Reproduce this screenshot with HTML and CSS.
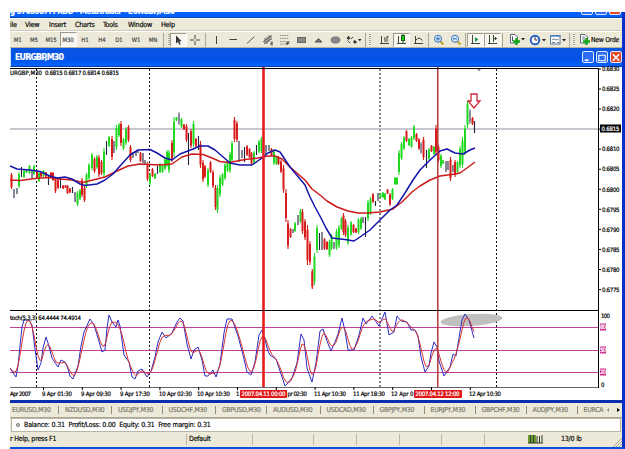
FILE: index.html
```html
<!DOCTYPE html>
<html lang="en">
<head>
    <meta charset="UTF-8">
    <meta name="viewport" content="width=device-width, initial-scale=1.0">
    <title>MetaTrader - EURGBP,M30</title>
    <link rel="stylesheet" href="styles.css">
</head>
<body>
    <div class="window">
        <div class="titlebar">
            <span class="title-text">g 5705987: FXDD - MetaTrader - EURGBP,M30</span>
            <div class="win-buttons cut">
                <span class="wb"></span><span class="wb"></span><span class="wb close"></span>
            </div>
        </div>
        <div class="menu">
            <span>ile</span><span>View</span><span>Insert</span><span>Charts</span><span>Tools</span><span>Window</span><span>Help</span>
        </div>
        <div class="toolbar">
            <span class="tf">M1</span><span class="tf">M5</span><span class="tf">M15</span><span class="tf on">M30</span><span class="tf">H1</span><span class="tf">H4</span><span class="tf">D1</span><span class="tf">W1</span><span class="tf">MN</span>
            <i class="sep"></i><i class="grip"></i>
            <span class="tool on"><svg width="12" height="12" viewBox="0 0 12 12"><path d="M3 1.500V9.500L5 7.800L6.300 10.800L7.700 10.200L6.400 7.300H8.700Z" fill="#333"/></svg></span>
            <span class="tool"><svg width="12" height="12" viewBox="0 0 12 12"><path d="M5 1V5M5 7V11M0 6H4M6 6H10" stroke="#444"/></svg></span>
            <i class="sep"></i>
            <span class="tool"><svg width="12" height="12" viewBox="0 0 12 12"><path d="M5.500 2V10" stroke="#444"/></svg></span>
            <span class="tool"><svg width="12" height="12" viewBox="0 0 12 12"><path d="M1.500 5.500H9" stroke="#444"/></svg></span>
            <span class="tool"><svg width="12" height="12" viewBox="0 0 12 12"><path d="M2 9.500L9.500 2.500" stroke="#444" stroke-width=".9"/></svg></span>
            <span class="tool"><svg width="12" height="12" viewBox="0 0 12 12"><path d="M1 8L9 2M2 10L9 5M3 4V9M5 3V10M7 1V8M9 1V6M11 8H9V11H11M9 9.500H11" stroke="#444" stroke-width=".8" fill="none"/></svg></span>
            <span class="tool"><svg width="12" height="12" viewBox="0 0 12 12"><path d="M1 1.500H10M1 4.500H10M1 7.500H7M1 10H7" stroke="#777" stroke-dasharray="1.500 .7" stroke-width=".8"/><path d="M8 11V8H10.500M8 9.500H10" stroke="#333" fill="none"/></svg></span>
            <span class="tool"><svg width="12" height="12" viewBox="0 0 12 12"><rect x="1.500" y="3.500" width="8" height="5" fill="#888" stroke="#666"/></svg></span>
            <span class="tool"><svg width="12" height="12" viewBox="0 0 12 12"><path d="M2 8L5.500 4.500L9 8Z" fill="#777" stroke="#555"/></svg></span>
            <span class="tool"><svg width="12" height="12" viewBox="0 0 12 12"><ellipse cx="5.500" cy="6" rx="4.300" ry="3" fill="#888" stroke="#666"/></svg></span>
            <span class="tool"><svg width="18" height="12" viewBox="0 0 18 12"><path d="M1.500 4L3.500 2L5.500 4L3.500 6ZM8 7.500L9.800 6L12 8L9.800 10Z" fill="#333"/><path d="M2.500 6.500L5 9M6 5L8 3" stroke="#444"/><path d="M13 5H16.500L14.800 7.300Z" fill="#222"/></svg></span>
            <i class="sep"></i><i class="grip"></i>
            <span class="tool"><svg width="12" height="12" viewBox="0 0 12 12"><path d="M2.500 2V9.500H10M5 4H6V8M8 2V8M8 3H9.500M1 9.500H3" stroke="#3d4a35" fill="none"/></svg></span>
            <span class="tool on"><svg width="12" height="12" viewBox="0 0 12 12"><path d="M2.500 2V9.500H10M1 9.500H3M7 0V9" stroke="#3d4a35" fill="none"/><rect x="5.500" y="1.500" width="3" height="5" fill="#1ed01e" stroke="#185c18"/></svg></span>
            <span class="tool"><svg width="12" height="12" viewBox="0 0 12 12"><path d="M2.500 2V9.500H10M1 9.500H3M3 6Q6 2 9.500 6.500" stroke="#3d4a35" fill="none"/></svg></span>
            <i class="sep"></i>
            <span class="tool"><svg width="12" height="12" viewBox="0 0 12 12"><path d="M7 7L10.500 10.500" stroke="#c9a227" stroke-width="2"/><circle cx="5" cy="4.800" r="3.500" fill="#dcecff" stroke="#3771b5"/><path d="M3 4.800H7M5 2.800V6.800" stroke="#205fb0"/></svg></span>
            <span class="tool"><svg width="12" height="12" viewBox="0 0 12 12"><path d="M7 7L10.500 10.500" stroke="#c9a227" stroke-width="2"/><circle cx="5" cy="4.800" r="3.500" fill="#dcecff" stroke="#3771b5"/><path d="M3 4.800H7" stroke="#205fb0"/></svg></span>
            <i class="sep"></i>
            <span class="tool on"><svg width="12" height="12" viewBox="0 0 12 12"><path d="M2.500 1V9.500H10M1 9.500H3" stroke="#3d4a35" fill="none"/><path d="M5 3V8L8.500 5.500Z" fill="#1c9c4a"/></svg></span>
            <span class="tool on"><svg width="12" height="12" viewBox="0 0 12 12"><path d="M2.500 1V9.500H10M1 9.500H3M6.500 1V8M6.500 4.500H10M8.500 3V6" stroke="#3d4a35" fill="none"/></svg></span>
            <i class="sep"></i>
            <span class="tool"><svg width="18" height="13" viewBox="0 0 18 13"><path d="M2.500 1.500H7L9.500 4V10H2.500Z" fill="#fff" stroke="#567"/><path d="M4.500 3.500V8" stroke="#456"/><path d="M8.500 5V12M5 8.500H12" stroke="#17a51c" stroke-width="2.400"/><path d="M13 5H17L15 7.500Z" fill="#222"/></svg></span>
            <span class="tool"><svg width="18" height="12" viewBox="0 0 18 12"><circle cx="6" cy="6" r="4.300" fill="#fff" stroke="#245fc0" stroke-width="1.900"/><path d="M6 3V6H8.500" stroke="#333" fill="none"/><path d="M13 5H17L15 7.500Z" fill="#222"/></svg></span>
            <span class="tool"><svg width="18" height="12" viewBox="0 0 18 12"><rect x="1.500" y="1.500" width="9.500" height="8.500" fill="#fff" stroke="#54799c"/><path d="M1 2H11.500" stroke="#4a86c8" stroke-width="1.500"/><path d="M3 6L5 4.800L7 6L9.500 5M3 8.500H6M8 8.500H10" stroke="#556" fill="none" stroke-width=".8"/><path d="M13 5H17L15 7.500Z" fill="#222"/></svg></span>
            <i class="sep"></i><i class="grip"></i>
            <span class="neworder"><svg width="13" height="13" viewBox="0 0 13 13"><path d="M2.500 1.500H7L9.500 4V10H2.500Z" fill="#fff" stroke="#567"/><path d="M4 4H7M4 6H7" stroke="#456" stroke-width=".8"/><path d="M8.500 5V12M5 8.500H12" stroke="#17a51c" stroke-width="2.400"/></svg>New Orde</span>
        </div>
        <div class="caption">
            <span>EURGBP,M30</span>
            <div class="win-buttons">
                <span class="wb"><svg width="11" height="11" viewBox="0 0 11 11"><path d="M2 8.500H6" stroke="#fff" stroke-width="2"/></svg></span>
                <span class="wb"><svg width="11" height="11" viewBox="0 0 11 11"><path d="M2 3H9V9H2Z" stroke="#fff" stroke-width="1.200" fill="none"/></svg></span>
                <span class="wb close"><svg width="11" height="11" viewBox="0 0 11 11"><path d="M2 2L9 9M9 2L2 9" stroke="#fff" stroke-width="1.700"/></svg></span>
            </div>
        </div>

        <svg class="chart" viewBox="10 67 612 333">
            <!-- day separators -->
            <path class="day" d="M36.500 69V387M149.500 69V387M380 69V387M496.500 69V387"/>
            <path class="price-line" d="M10 129H598"/>
            <ellipse cx="471.500" cy="320" rx="31" ry="6" fill="#c0c0c0" transform="rotate(-4 471.500 320)"/>
            <path class="level" d="M10 327.500H598M10 350.500H598M10 372.500H598"/>

            <g id="candles"></g>

            <path class="ma slow" d="M10 180L20 180.500L35 178.500L48 177.500L60 179L72 180L83 182.500L93 180L105 177L117 171L128 166L140 164L160 165L172 164L182 157L192 154L203 154.500L212 158L220 161.500L229 162.500L245 159.500L258 158L268 156L275 156L282 159L290 167L298 174L305 180L312 189L320 195L327 201L337 207L348 211L358 213L368 213L380 212L393 209L402 202L412 192L420 186L430 180L440 176L455 174L460 173L467 168L475 162"/>
            <path class="ma fast" d="M10 166L17 169L30 170L40 171.500L50 176L57 178L65 177L72 179L80 184L85 185.500L97 184L105 180L113 174L120 166L130 155L138 150L150 149.500L157 153L165 158L172 160L180 154L193 149L200 146L208 146L215 150L222 156L230 163L240 165L252 165L262 158L268 153L275 150L280 152L286 161L290 167L300 179L305 185L310 197L315 207L321 218L326 228L332 238L345 239.500L354 241L360 237L370 230L380 220L390 210L397 205L405 193L413 180L420 170L430 160L440 151L447 149L455 153L463 154L470 150L475 148"/>

            <polyline class="stoch" id="main"/>
            <polyline class="stoch signal" id="signal"/>

            <path d="M263.500 67V388" stroke="#e81c1c" stroke-width="2.600"/>
            <path d="M437.800 67V388" stroke="#b8383c" stroke-width="1.500"/>
            <path d="M471 94H477V101H480L474 108L468 101H471Z" fill="#fff" stroke="#cc2a38" stroke-width="1.300"/>
            <path d="M477 69H481L479 71.500Z" fill="#888"/>

            <!-- frame -->
            <path d="M10 68.500H598.500V388M10 310.500H598" fill="none" stroke="#000"/>
            <path d="M10 387.500H598" stroke="#666"/>
            <path id="ticks" stroke="#000"/>

            <g class="label">
                <text x="10" y="75" textLength="32">URGBP,M30</text>
                <text x="45" y="75" textLength="74">0.6815 0.6817 0.6814 0.6815</text>
                <text x="10" y="320" textLength="71">toch(5,3,3) 64.4444 74.4914</text>
            </g>
            <g class="label" id="prices"></g>
            <rect x="600" y="124.500" width="21" height="8"/>
            <text class="label inv" x="601.500" y="131" textLength="18">0.6815</text>
            <g class="label">
                <text x="601" y="318" textLength="9">100</text>
                <text x="601" y="386.500">0</text>
            </g>
            <path d="M600 323.500h6v7h-6zM600 346.500h6v7h-6zM600 368.500h6v7h-6z" fill="#cc2288"/>
            <g class="label inv">
                <text x="600" y="329.300" textLength="6">80</text>
                <text x="600" y="352.300" textLength="6">50</text>
                <text x="600" y="374.300" textLength="6">20</text>
            </g>
            <g class="label">
                <text x="10" y="396" textLength="21">Apr 2007</text>
                <text x="42" y="396" textLength="30">9 Apr 01:30</text>
                <text x="81" y="396" textLength="30">9 Apr 09:30</text>
                <text x="120" y="396" textLength="30">9 Apr 17:30</text>
                <text x="159" y="396" textLength="33">10 Apr 02:30</text>
                <text x="197" y="396" textLength="33">10 Apr 10:30</text>
                <text x="236" y="396">1</text>
                <text x="287.500" y="396" textLength="19.500">pr 02:30</text>
                <text x="314" y="396" textLength="32">11 Apr 10:30</text>
                <text x="353" y="396" textLength="32">11 Apr 18:30</text>
                <text x="391" y="396" textLength="22.500">12 Apr 0</text>
                <text x="469" y="396" textLength="32">12 Apr 10:30</text>
            </g>
            <rect x="240" y="390" width="47" height="8" rx="1" fill="#e01818"/>
            <rect x="414" y="390" width="48" height="8" rx="1" fill="#e01818"/>
            <g class="label inv">
                <text x="241.500" y="396.200" textLength="44">2007.04.11 00:00</text>
                <text x="415.500" y="396.200" textLength="44">2007.04.12 12:00</text>
            </g>
        </svg>

        <div class="tabs">
            <span>EURUSD,M30</span><span>NZDUSD,M30</span><span>USDJPY,M30</span><span>USDCHF,M30</span><span>GBPUSD,M30</span><span>AUDUSD,M30</span><span>USDCAD,M30</span><span>GBPJPY,M30</span><span>EURJPY,M30</span><span>GBPCHF,M30</span><span>AUDJPY,M30</span><span>EURCA</span>
            <div class="arrows"><b class="left"></b><b class="right"></b></div>
        </div>
        <div class="terminal">
            <i class="dot"></i>
            <span>Balance: 0.31&nbsp; Profit/Loss: 0.00&nbsp; Equity: 0.31&nbsp; Free margin: 0.31</span>
        </div>
        <div class="status">
            <span class="help">r Help, press F1</span>
            <span>Default</span>
            <span></span><span></span><span></span><span></span><span></span><span></span>
            <span class="conn"><svg width="15" height="9" viewBox="0 0 15 9"><path d="M1 0V8M4 0V8M7 0V8" stroke="#6f9a2e" stroke-width="2"/><path d="M2.500 0V8M5.500 0V8M9 1V8M11.500 1V8M14 0V8M0 8H15" stroke="#2c3a2c" stroke-width="1"/></svg></span>
            <span class="traffic">13/0 lb</span>
            <svg class="resize" width="9" height="9" viewBox="0 0 9 9"><path d="M0 9L9 0M3 9L9 3M6 9L9 6" stroke="#aaa592"/></svg>
        </div>
    </div>
    <script src="chart.js"></script>
</body>
</html>
```
FILE: styles.css
```css
*{
    margin: 0;
    padding: 0;
    box-sizing: border-box;
}

body{
    background-color: #fff;
    width: 625px;
    height: 449px;
    overflow: hidden;
    padding: 12px 0 0 10px;
    font-family: "DejaVu Sans Condensed", "DejaVu Sans", sans-serif;
    font-size: 7px;
    color: #000;
    -webkit-text-stroke: 0.15px;
}

.window{
    display: flex;
    flex-direction: column;
    width: 615px;
    height: 437px;
    border-right: 3px solid #0831c8;
    border-bottom: 2px solid #0c50dc;
    background-color: #ece9d8;
    overflow: hidden;
}

.titlebar{
    display: flex;
    justify-content: space-between;
    flex: none;
    height: 6px;
    background-color: #0360f8;
    border-bottom: 1px solid #0a48c0;
    overflow: hidden;
}

.title-text{
    color: #fff;
    font-weight: bold;
    font-size: 8px;
    line-height: 8px;
    letter-spacing: -0.48px;
    margin-top: -4.5px;
    white-space: nowrap;
}

.win-buttons{
    display: flex;
    gap: 2px;
}

.wb{
    display: flex;
    align-items: center;
    justify-content: center;
    width: 12px;
    height: 12px;
    border: 1px solid #dfe9ff;
    border-radius: 2px;
    background-color: #2c6cf0;
}

.wb.close{
    background-color: #e04a28;
}

.cut{
    margin-top: -9px;
    margin-right: 1px;
}

.menu{
    display: grid;
    grid-template-columns: 15px 24px 26px 28px 25px 33px 30px;
    flex: none;
    height: 13px;
    line-height: 12px;
    font-size: 7.2px;
    letter-spacing: -0.25px;
    border-top: 1px solid #fff;
    border-bottom: 1px solid #cfcbb8;
}

.toolbar{
    display: grid;
    grid-template-columns: 15.5px repeat(8, 17px) 4px 4.5px 17px 17px 4px repeat(8, 17px) 20px 3px 9px repeat(3, 17px) 3px repeat(2, 17px) 3px repeat(2, 17px) 5px 21px 21px 20px 3px 7px 45px;
    align-items: center;
    flex: none;
    height: 17px;
    border-top: 1px solid #fff;
    border-bottom: 1px solid #b5b19e;
    overflow: hidden;
}

.tf{
    text-align: center;
    font-size: 6px;
    color: #444;
    line-height: 13px;
    letter-spacing: -0.1px;
}

.tool{
    display: flex;
    align-items: center;
    justify-content: center;
    height: 14px;
}

.on{
    background-color: #f7f6f0;
    border: 1px solid;
    border-color: #9c9a8c #fff #fff #9c9a8c;
}

.sep{
    width: 1px;
    height: 14px;
    margin-left: 1px;
    background-color: #aaa797;
}

.grip{
    width: 2px;
    height: 12px;
    margin-left: 2px;
    background: repeating-linear-gradient(#a5a292 0 1px, #f4f2e8 1px 2px);
}

.neworder{
    display: flex;
    align-items: center;
    white-space: nowrap;
    font-size: 6.8px;
    letter-spacing: -0.25px;
}

.caption{
    display: flex;
    align-items: center;
    justify-content: space-between;
    flex: none;
    height: 19px;
    padding: 0 0 0 4px;
    color: #fff;
    font-family: "DejaVu Sans Condensed", sans-serif;
    font-weight: bold;
    font-size: 8.8px;
    letter-spacing: -0.85px;
    background: linear-gradient(#0a55e0, #0352e8 60%, #0463fa);
    border-left: 1px solid #cfe0ff;
    border-bottom: 1px solid #0a3fae;
}

.chart{
    display: block;
    flex: none;
    width: 612px;
    height: 333px;
    background-color: #fff;
    overflow: visible;
}

.day{
    stroke: #111;
    stroke-dasharray: 2 2;
}

.price-line{
    stroke: #b4b4c0;
    stroke-width: 1.4;
}

.level{
    stroke: #c0409a;
}

.ma{
    fill: none;
    stroke-width: 1.5;
    stroke-linejoin: round;
}

.slow{
    stroke: #cc1a1a;
}

.fast{
    stroke: #1414a8;
}

.stoch{
    fill: none;
    stroke: #2c2cc4;
    stroke-width: 1;
}

.signal{
    stroke: #d83434;
}

.label{
    font-size: 6px;
    fill: #000;
    -webkit-text-stroke: 0;
    stroke: #000;
    stroke-width: 0.2;
}

.inv{
    fill: #fff;
    stroke: #fff;
}

.tabs{
    display: grid;
    grid-template-columns: 49px 53px 50.5px 53.5px 51px 53.5px 53px 51px 51px 51px 51px 27px 1fr;
    align-items: center;
    flex: none;
    height: 18px;
    padding-top: 0;
    border-top: 3px solid #0a2fae;
    border-bottom: 1px solid #aaa797;
    color: #77756a;
    font-size: 6.8px;
    letter-spacing: -0.2px;
}

.tabs span{
    overflow: hidden;
    line-height: 8px;
    padding-left: 6px;
    border-right: 1px solid #8f8c7e;
}

.tabs span:first-child{
    padding-left: 2px;
}

.tabs span:nth-of-type(12){
    border-right: none;
}

.arrows{
    display: flex;
    gap: 8px;
}

.arrows b{
    border: 2px solid transparent;
}

.arrows .left{
    border-right-color: #888;
}

.arrows .right{
    border-left: 3px solid #000;
}

.terminal{
    display: flex;
    align-items: center;
    gap: 4px;
    flex: none;
    height: 14px;
    margin: 0 1px 0 1px;
    padding-left: 4px;
    background-color: #fff;
    border: 1px solid #b8b5a4;
    font-size: 7px;
    letter-spacing: -0.19px;
}

.dot{
    width: 4px;
    height: 4px;
    border: 1px solid #777;
    border-radius: 50%;
    background-color: #ccc;
}

.status{
    display: grid;
    grid-template-columns: 176px 66px 61px 43px 43px 42px 43px 41px 34px 54px 9px;
    align-items: center;
    flex: 1;
    letter-spacing: -0.2px;
}

.status span{
    height: 11px;
    line-height: 11px;
    padding-left: 2px;
    border-left: 1px solid #bdb9a6;
}

.status .help{
    padding-left: 0;
    border-left: none;
}

.status .conn{
    display: flex;
    align-items: center;
    border-left: none;
    padding-left: 3px;
}

.status .traffic{
    border-left: none;
    padding-left: 2px;
}

.resize{
    align-self: end;
}
```
FILE: chart.js
```javascript
const NS = "http://www.w3.org/2000/svg";
const colors = { g: "#22d822", r: "#d81c1c", d: "#22223c", s: "#8a8a9c" };

// colour, x, high, low
const candles = `r11.5 173 189,d14 189 198,d17 188 194,g19 172 188,d21.5 167 177,g24 170 178,g26.500 169 173,g29.5 165 174,d32 170 178,
g34 165 175,r37 170 178,g39 172 182,r41 172 177,g43.5 170 177,r46 172 177,d48.5 175 185,r51 172 178,r53 172 181,r55.5 177 193,
r58 179 189,d60.5 178 188,r63 185 189,r65.5 185 188,r67.5 185 194,r70 188 193,d72.5 187 193,d75 192 202,g77.5 191 206,g80 189 200,
r82 178 197,r84.5 186 202,g86.5 173 188,g89 163 180,g92 153 170,r94.5 157 173,g97 155 169,r99 155 177,r101.5 160 175,g104 148 177,
d106.5 141 155,g109 136 147,r112 136 160,d114 141 153,g116.5 125 150,g119 123 137,r121 121 146,g123.5 138 150,g126 127 145,
r128.5 125 142,r130.5 145 162,d133 152 158,d136 152 156,d138 150 153,r140.5 152 162,d143 153 163,d145 160 164,r147.5 162 181,
g150 173 185,r152.5 168 177,g155 173 179,d157.5 166 174,g160 163 173,g162.5 165 173,g165 158 170,g167 150 167,g169 150 173,
r172 140 162,g174 117 157,g176.5 117 121,s179 112 125,g181.5 118 128,r184 124 130,r186.5 124 142,d188.5 133 165,r191 129 148,
g193.5 121 147,r196 138 147,d198.5 136 150,r200.5 141 168,r203 160 182,r205 165 178,g208 168 187,r210.5 161 173,r213 170 188,
r215.5 185 210,g217.5 185 213,g220 175 197,g222.5 173 186,g225 163 180,g227.5 160 172,g230 152 173,g232 141 162,r234.5 117 142,
r237 121 142,d239 141 162,d242 150 158,d244.5 147 162,r247 145 156,r249.5 148 158,r251.5 152 165,g254 151 164,d256.5 145 155,
g259 140 153,g261.5 137 153,d266 145 154,d269 145 151,r271.5 148 156,g274 150 165,g276.5 156 165,r278.5 156 165,r281 160 173,
r283.5 165 193,r286 189 222,r288 220 249,r290.5 228 238,d293 229 233,g295 222 232,d298 215 225,g300.5 209 223,r302.5 209 234,
r305 219 240,r307.5 225 265,r310 241 265,r312.3 269 289,g314.5 253 285,g317 225 253,d319.5 233 250,d322 232 250,r324.5 238 250,
r327 241 250,g329.5 240 257,g331.5 234 250,d334 242 249,g336.5 229 250,g339 225 248,g341.5 217 230,r343.5 213 235,r345.5 219 237,
g348 225 245,g351 221 236,r353.5 224 233,r356 228 233,g358.5 218 234,g361 217 230,d363 217 223,d365.5 217 237,g368 200 221,
g370.5 197 215,r373 193 203,d375.5 201 206,d378 193 201,g380.5 193 198,g383 192 198,g385 193 200,r387.5 189 194,r390 193 206,
g392.5 188 200,g395 177 185,g397 177 185,g399 150 175,g401.5 142 160,g404 136 150,r406.5 130 142,g409 138 146,g411.5 136 148,
g414 125 140,r416.5 133 142,r419 138 150,s421 142 154,r423.5 137 160,d426.5 150 168,g429 148 160,r431.5 145 152,g434 146 155,
r436 125 155,r438.5 145 162,g441 154 168,g443 160 164,d446 161 172,d448 161 170,r450.5 157 181,d453 165 172,r455 160 177,
g457.5 161 173,g460 146 168,g462.5 137 168,g465 125 155,g467.5 101 128,s470 109 124,r472.5 117 125,d474.5 121 133`;

function line(x, y1, y2, color, width) {
    const el = document.createElementNS(NS, "path");
    el.setAttribute("d", `M${x} ${y1}V${y2}`);
    el.setAttribute("stroke", color);
    el.setAttribute("stroke-width", width);
    document.getElementById("candles").appendChild(el);
}

candles.split(",").forEach((c) => {
    c = c.trim();
    const [x, high, low] = c.slice(1).split(" ").map(Number);
    const color = colors[c[0]];
    const pad = (low - high) * 0.12;
    line(x, high, low, color, 1.1);
    if (c[0] !== "d") line(x, high + pad, low - pad, color, 2);
});

// stochastic, main line
const main = `10 368,16 377,18 366,20 346,22 327,24 320,29 320,32 325,35 349,38 370,41 363,43 348,46 337,48 343,52 358,58 367,61 360,
65 362,67 366,70 376,73 379,78 366,81 346,84 332,90 319,94 325,98 338,102 352,105 350,107 328,109 315,112 322,116 327,118 320,
120 326,124 355,129 362,132 377,135 379,138 371,142 369,147 377,151 371,155 357,158 342,162 332,166 338,172 333,177 322,180 318,
183 321,187 344,191 359,194 350,198 347,202 360,205 376,208 376,213 370,216 377,220 364,224 333,227 319,232 319,238 336,243 355,
247 372,251 375,255 362,259 335,262 330,265 340,268 351,270 355,276 359,281 374,285 386,287 384,292 378,297 363,301 334,304 340,
307 368,312 382,316 363,320 331,323 329,327 341,331 351,335 342,338 334,342 318,345 331,348 350,354 350,359 335,363 318,366 324,
372 316,379 326,385 312,389 335,394 332,397 316,401 321,407 322,411 330,415 330,418 336,421 357,425 372,429 366,431 353,434 342,
437 347,439 361,444 376,450 367,453 354,456 356,459 338,462 320,465 314,469 320,474 338`
    .split(",").map((p) => p.trim().split(" ").map(Number));

function valueAt(x) {
    if (x <= main[0][0]) return main[0][1];
    const i = main.findIndex((p) => p[0] >= x);
    if (i < 0) return main[main.length - 1][1];
    const [x1, y1] = main[i - 1];
    const [x2, y2] = main[i];
    return y1 + (y2 - y1) * (x - x1) / (x2 - x1);
}

// signal line is a 3 bar average of the main one
const signal = [];
for (let x = 10; x <= 474; x += 2) {
    signal.push([x, (valueAt(x + 1.6) + valueAt(x - 1.2) + valueAt(x - 4.2)) / 3]);
}
document.getElementById("main").setAttribute("points", main.join(" "));
document.getElementById("signal").setAttribute("points", signal.join(" "));

// scales
let ticks = "";
for (let i = 0; i < 12; i++) {
    const y = 69 + i * 20.05;
    ticks += `M598 ${y}h3M${43.5 + i * 38.8} 387v3`;
    if (i === 3) continue;
    const t = document.createElementNS(NS, "text");
    t.setAttribute("x", 602);
    t.setAttribute("y", y + 2.2);
    t.setAttribute("textLength", 17.5);
    t.textContent = (0.683 - i * 0.0005).toFixed(4);
    document.getElementById("prices").appendChild(t);
}
document.getElementById("ticks").setAttribute("d", ticks);
```
